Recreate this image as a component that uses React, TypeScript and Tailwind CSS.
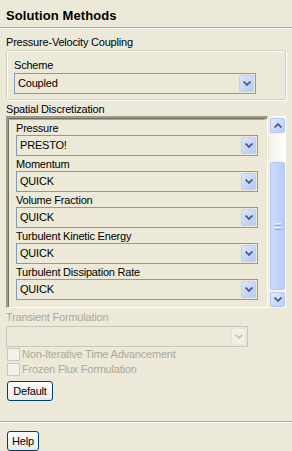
import React from 'react';

const Chevron: React.FC<{ up?: boolean; color?: string }> = ({ up, color = '#4D6185' }) => (
  <svg width="8" height="5" viewBox="0 0 8 5" className={up ? 'rotate-180' : ''}>
    <path d="M0.5 0.5 L4 4 L7.5 0.5" fill="none" stroke={color} strokeWidth="1.8" />
  </svg>
);

const DropButton: React.FC<{ disabled?: boolean }> = ({ disabled }) =>
  disabled ? (
    <div className="m-px flex w-[15px] items-center justify-center rounded-[2px] border border-[#E6E4DA] bg-[#F1EFE6]">
      <Chevron color="#C9C7BA" />
    </div>
  ) : (
    <div className="m-px flex w-[15px] items-center justify-center rounded-[2px] border border-[#BCD0FA] bg-gradient-to-br from-[#DCE6FD] to-[#B5C9F6]">
      <Chevron />
    </div>
  );

const Select: React.FC<{ value?: string; disabled?: boolean; width?: string }> = ({
  value,
  disabled,
  width = 'w-[242px]',
}) => (
  <div
    className={`flex h-[21px] ${width} border ${
      disabled ? 'border-[#C9C7BA]' : 'border-[#7F9DB9]'
    } bg-[#ECE9D8]`}
  >
    <div className="flex-1 pl-[3px] leading-[19px]">{value}</div>
    <DropButton disabled={disabled} />
  </div>
);

const XpButton: React.FC<{ label: string; width: string }> = ({ label, width }) => (
  <button
    className={`h-[20px] ${width} rounded-[3px] border border-[#003C74] bg-gradient-to-b from-white to-[#ECEBE6] text-center leading-[17px] text-black`}
  >
    {label}
  </button>
);

const Checkbox: React.FC<{ label: string }> = ({ label }) => (
  <div className="flex h-[13px] items-center">
    <div className="ml-[7px] h-[13px] w-[13px] border border-[#CAC8BB] bg-[#F2F1EA]" />
    <span className="ml-[2px] leading-[13px] text-[#ACA899]">{label}</span>
  </div>
);

const fields = [
  { label: 'Pressure', value: 'PRESTO!' },
  { label: 'Momentum', value: 'QUICK' },
  { label: 'Volume Fraction', value: 'QUICK' },
  { label: 'Turbulent Kinetic Energy', value: 'QUICK' },
  { label: 'Turbulent Dissipation Rate', value: 'QUICK' },
];

const ScrollBtn: React.FC<{ up?: boolean }> = ({ up }) => (
  <div className="mx-px flex h-[15px] items-center justify-center rounded-[2px] border border-[#B3C6F3] bg-gradient-to-br from-[#E1EAFE] to-[#B9CCF8]">
    <Chevron up={up} />
  </div>
);

export default function App() {
  return (
    <div className="flex h-[451px] w-[292px] flex-col bg-[#ECE9D8] font-['Tahoma','Liberation_Sans',sans-serif] text-[11px] tracking-[-0.2px] text-black">
      <div className="h-[27px] pl-[6px] pt-[8px] text-[13px] font-bold leading-[16px] tracking-[0.1px]">
        Solution Methods
      </div>
      <div className="h-px bg-[#ACA899]" />
      <div className="h-px bg-white" />

      <div className="ml-[6px] mt-[7px] h-[13px] leading-[13px]">Pressure-Velocity Coupling</div>
      <div className="mx-[6px] mt-px rounded-[2px] border border-[#D0D0BF] pb-[5px] pl-[7px] pt-[8px] shadow-[1px_1px_0_#fff,inset_1px_1px_0_#fff]">
        <div className="h-[13px] leading-[13px]">Scheme</div>
        <div className="mt-px">
          <Select value="Coupled" />
        </div>
      </div>

      <div className="ml-[6px] mt-[3px] h-[13px] leading-[13px]">Spatial Discretization</div>
      <div className="ml-[6px] flex h-[192px]">
        <div className="h-[192px] w-[262px] overflow-hidden border-b border-l-2 border-r border-t-2 border-b-white border-l-[#9D9A8C] border-r-white border-t-[#9D9A8C] shadow-[inset_1px_1px_0_#716F64]">
          <div className="mr-[2px] h-[2px] border-b border-r border-[#ACA899]" />
          {fields.map((f) => (
            <div key={f.label}>
              <div className="h-[15px] pl-[8px] pt-[1px] leading-[14px]">{f.label}</div>
              <div className="ml-[8px]">
                <Select value={f.value} />
              </div>
            </div>
          ))}
        </div>
        <div className="ml-px flex h-[192px] w-[17px] flex-col bg-gradient-to-r from-[#F3F1EA] to-[#FEFEFB] pb-px pt-[2px]">
          <ScrollBtn up />
          <div className="h-[29px]" />
          <div className="mx-px flex h-[128px] items-center justify-center rounded-[2px] border border-[#B3C6F3] bg-gradient-to-r from-[#CCDAFD] to-[#B9CCF8]">
            <div className="flex flex-col gap-px">
              <div className="h-px w-[6px] bg-[#EEF3FE]" />
              <div className="h-px w-[6px] bg-[#8CA6E3]" />
              <div className="h-px w-[6px] bg-[#EEF3FE]" />
              <div className="h-px w-[6px] bg-[#8CA6E3]" />
            </div>
          </div>
          <div className="flex-1" />
          <ScrollBtn />
        </div>
      </div>

      <div className="ml-[6px] mt-[3px] h-[13px] leading-[13px] text-[#ACA899]">Transient Formulation</div>
      <div className="ml-[6px] mt-[2px]">
        <Select disabled width="w-[242px]" />
      </div>
      <div className="mt-px">
        <Checkbox label="Non-Iterative Time Advancement" />
      </div>
      <div className="mt-[2px]">
        <Checkbox label="Frozen Flux Formulation" />
      </div>
      <div className="ml-[7px] mt-[5px]">
        <XpButton label="Default" width="w-[46px]" />
      </div>

      <div className="mt-[20px] h-px bg-[#ACA899]" />
      <div className="h-px bg-white" />
      <div className="ml-[7px] mt-[8px]">
        <XpButton label="Help" width="w-[32px]" />
      </div>
    </div>
  );
}
